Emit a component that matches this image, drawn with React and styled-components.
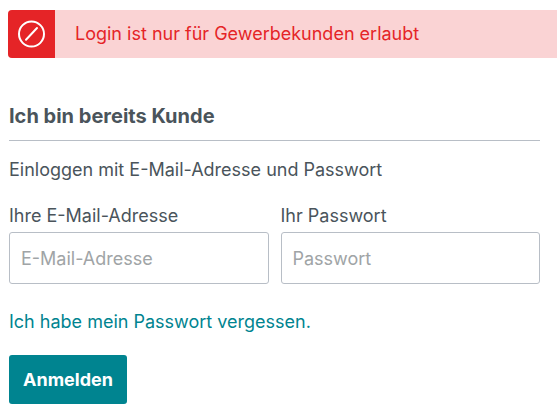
import React from "react";
import styled, { createGlobalStyle } from "styled-components";

const GlobalStyle = createGlobalStyle`
  *, *::before, *::after { box-sizing: border-box; }
  body {
    margin: 0;
    background: #fff;
    color: #4a545b;
    font-family: Inter, "Liberation Sans", sans-serif;
    font-size: 18px;
    line-height: 24px;
  }
`;

const Page = styled.main`
  padding: 10px 0 14px 8px;
`;

const Alert = styled.div`
  display: flex;
  min-height: 48px;
  border-radius: 4px 0 0 4px;
  overflow: hidden;
  background: #fad3d4;
  color: #e52427;
`;

const AlertIcon = styled.span`
  display: flex;
  flex: none;
  align-items: center;
  justify-content: center;
  width: 47px;
  background: #e52427;
  color: #fff;
`;

const AlertText = styled.p`
  margin: 0;
  padding: 12px 20px;
`;

const LoginForm = styled.form`
  margin: 46px 17px 0 1px;
`;

const Title = styled.h2`
  margin: 0;
  padding-bottom: 12px;
  border-bottom: 1px solid #b8bec6;
  font-size: 20px;
  font-weight: 700;
  line-height: 24px;
`;

const Intro = styled.p`
  margin: 17px 0 22px;
`;

const Fields = styled.div`
  display: grid;
  grid-template-columns: 1fr 1fr;
  gap: 12px;
`;

const Field = styled.div`
  display: flex;
  flex-direction: column;
  gap: 4px;
`;

const Input = styled.input`
  width: 100%;
  height: 52px;
  padding: 0 11px;
  border: 1px solid #b8bec6;
  border-radius: 3px;
  background: #fff;
  color: inherit;
  font: inherit;
  &::placeholder { color: #a0a4a6; opacity: 1; }
`;

const ForgotLink = styled.a`
  display: inline-block;
  margin: 26px 0 21px;
  color: #008490;
  text-decoration: none;
`;

const SubmitButton = styled.button`
  display: block;
  height: 49px;
  padding: 0 14px;
  border: 0;
  border-radius: 3px;
  background: #008490;
  color: #fff;
  font: inherit;
  font-weight: 700;
`;

export default function App() {
  return (
    <>
      <GlobalStyle />
      <Page>
        <Alert role="alert">
          <AlertIcon>
            <svg width="27" height="28" viewBox="0 0 27 28" fill="none" stroke="currentColor" strokeWidth="2" aria-hidden="true">
              <circle cx="13.5" cy="14" r="12.5" />
              <path d="M8 19.8L19 8" strokeLinecap="round" />
            </svg>
          </AlertIcon>
          <AlertText>Login ist nur für Gewerbekunden erlaubt</AlertText>
        </Alert>
        <LoginForm onSubmit={(e) => e.preventDefault()}>
          <Title>Ich bin bereits Kunde</Title>
          <Intro>Einloggen mit E-Mail-Adresse und Passwort</Intro>
          <Fields>
            <Field>
              <label htmlFor="email">Ihre E-Mail-Adresse</label>
              <Input id="email" type="email" placeholder="E-Mail-Adresse" />
            </Field>
            <Field>
              <label htmlFor="password">Ihr Passwort</label>
              <Input id="password" type="password" placeholder="Passwort" />
            </Field>
          </Fields>
          <ForgotLink href="#passwort">Ich habe mein Passwort vergessen.</ForgotLink>
          <SubmitButton type="submit">Anmelden</SubmitButton>
        </LoginForm>
      </Page>
    </>
  );
}
